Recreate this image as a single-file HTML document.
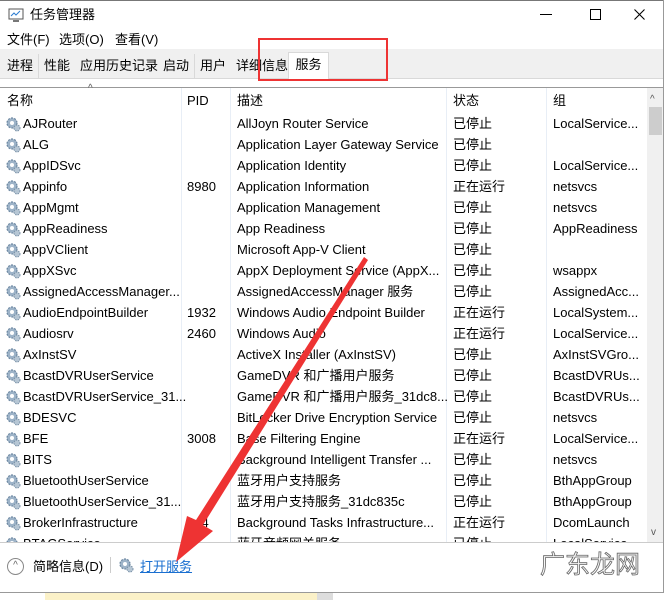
<!DOCTYPE html><html><head><meta charset="utf-8"><style>
body{margin:0;width:671px;height:600px;overflow:hidden;background:#fff;font-family:"Liberation Sans","Noto Sans CJK SC",sans-serif;font-size:13px;line-height:16px;color:#000;position:relative}
.a{position:absolute;white-space:nowrap}
.row{position:absolute;left:0;width:647px;height:21px}
.row span{position:absolute;top:3px;white-space:nowrap;line-height:16px;height:16px}
.vl{position:absolute;top:88px;height:454px;width:1px;background:#e8eef6}
.tab{position:absolute;top:54px;height:24px;background:#f0f0f0;border-right:1px solid #d9d9d9;line-height:24px;padding:0 5px;font-size:13px}
</style></head><body>
<div class="a" style="left:0;top:0;width:664px;height:1px;background:#777"></div>
<div class="a" style="left:663px;top:0;width:1px;height:592px;background:#999"></div>
<svg class="a" style="left:8px;top:7px" width="16" height="16"><rect x="1" y="2" width="14" height="10" fill="#fff" stroke="#555"/><polyline points="3,9 6,6 8,8 12,4" fill="none" stroke="#2a7bd0"/><rect x="5" y="13" width="6" height="2" fill="#777"/></svg>
<div class="a" style="left:30px;top:7px">任务管理器</div>
<div class="a" style="left:540px;top:14px;width:12px;height:1px;background:#000"></div>
<div class="a" style="left:590px;top:9px;width:9px;height:9px;border:1px solid #000"></div>
<svg class="a" style="left:634px;top:9px" width="11" height="11"><path d="M0.5 0.5L10.5 10.5M10.5 0.5L0.5 10.5" stroke="#000" stroke-width="1.1"/></svg>
<div class="a" style="left:7px;top:32px">文件(F)</div>
<div class="a" style="left:59px;top:32px">选项(O)</div>
<div class="a" style="left:115px;top:32px">查看(V)</div>
<div class="a" style="left:0;top:49px;width:663px;height:29px;background:#f0f0f0"></div>
<div class="a" style="left:0;top:78px;width:663px;height:1px;background:#d9d9d9"></div>
<div class="tab" style="left:2px">进程</div>
<div class="tab" style="left:39px">性能</div>
<div class="tab" style="left:75px">应用历史记录</div>
<div class="tab" style="left:158px">启动</div>
<div class="tab" style="left:195px">用户</div>
<div class="tab" style="left:231px">详细信息</div>
<div class="a" style="left:288px;top:52px;width:39px;height:27px;background:#fff;border:1px solid #d9d9d9;border-bottom:none;line-height:24px;text-align:center">服务</div>
<div class="a" style="left:258px;top:38px;width:126px;height:39px;border:2px solid #ee3333"></div>
<div class="a" style="left:0;top:87px;width:663px;height:1px;background:#999"></div>
<div class="a" style="left:88px;top:81px;font-size:10px;color:#555">^</div>
<div class="a" style="left:7px;top:93px">名称</div>
<div class="a" style="left:187px;top:93px">PID</div>
<div class="a" style="left:237px;top:93px">描述</div>
<div class="a" style="left:453px;top:93px">状态</div>
<div class="a" style="left:553px;top:93px">组</div>
<div class="vl" style="left:181px"></div><div class="vl" style="left:230px"></div><div class="vl" style="left:446px"></div><div class="vl" style="left:546px"></div>
<div class="a" style="left:647px;top:88px;width:16px;height:454px;background:#f0f0f0"></div>
<div class="a" style="left:649px;top:107px;width:13px;height:28px;background:#cdcdcd"></div>
<div class="a" style="left:650px;top:92px;font-size:10px;color:#555">^</div>
<div class="a" style="left:651px;top:525px;font-size:10px;color:#555">v</div>
<svg width="0" height="0" style="position:absolute"><defs><g id="g"><circle cx="7" cy="7" r="5" fill="#9db3c8" stroke="#6b86a0" stroke-width="1.2" stroke-dasharray="2 1.2"/><circle cx="7" cy="7" r="2" fill="#fff"/><circle cx="12" cy="12" r="3" fill="#b6c6d4" stroke="#7890a6" stroke-dasharray="1.5 1"/></g></defs></svg>
<div id="rows"></div>
<script>
var d=[["AJRouter","","AllJoyn Router Service","已停止","LocalService..."],["ALG","","Application Layer Gateway Service","已停止",""],["AppIDSvc","","Application Identity","已停止","LocalService..."],["Appinfo","8980","Application Information","正在运行","netsvcs"],["AppMgmt","","Application Management","已停止","netsvcs"],["AppReadiness","","App Readiness","已停止","AppReadiness"],["AppVClient","","Microsoft App-V Client","已停止",""],["AppXSvc","","AppX Deployment Service (AppX...","已停止","wsappx"],["AssignedAccessManager...","","AssignedAccessManager 服务","已停止","AssignedAcc..."],["AudioEndpointBuilder","1932","Windows Audio Endpoint Builder","正在运行","LocalSystem..."],["Audiosrv","2460","Windows Audio","正在运行","LocalService..."],["AxInstSV","","ActiveX Installer (AxInstSV)","已停止","AxInstSVGro..."],["BcastDVRUserService","","GameDVR 和广播用户服务","已停止","BcastDVRUs..."],["BcastDVRUserService_31...","","GameDVR 和广播用户服务_31dc8...","已停止","BcastDVRUs..."],["BDESVC","","BitLocker Drive Encryption Service","已停止","netsvcs"],["BFE","3008","Base Filtering Engine","正在运行","LocalService..."],["BITS","","Background Intelligent Transfer ...","已停止","netsvcs"],["BluetoothUserService","","蓝牙用户支持服务","已停止","BthAppGroup"],["BluetoothUserService_31...","","蓝牙用户支持服务_31dc835c","已停止","BthAppGroup"],["BrokerInfrastructure","944","Background Tasks Infrastructure...","正在运行","DcomLaunch"],["BTAGService","","蓝牙音频网关服务","已停止","LocalService..."]];
var h="";d.forEach(function(r,i){h+='<div class="row" style="top:'+(113+i*21)+'px"><svg style="position:absolute;left:5px;top:3px" width="16" height="16"><use href="#g"/></svg><span style="left:23px">'+r[0]+'</span><span style="left:187px">'+r[1]+'</span><span style="left:237px">'+r[2]+'</span><span style="left:453px">'+r[3]+'</span><span style="left:553px">'+r[4]+'</span></div>'});
document.getElementById("rows").innerHTML=h;
</script>
<div class="a" style="left:0;top:542px;width:663px;height:50px;background:#fff;border-top:1px solid #ccc"></div>
<div class="a" style="left:0;top:592px;width:664px;height:1px;background:#999"></div>
<div class="a" style="left:45px;top:593px;width:272px;height:7px;background:#fbf1c8"></div>
<div class="a" style="left:317px;top:593px;width:16px;height:7px;background:#ddd"></div>
<div class="a" style="left:7px;top:558px;width:15px;height:15px;border:1px solid #888;border-radius:50%;font-size:10px;line-height:14px;text-align:center;color:#666">^</div>
<div class="a" style="left:33px;top:559px">简略信息(D)</div>
<div class="a" style="left:110px;top:557px;width:1px;height:16px;background:#ccc"></div>
<svg class="a" style="left:118px;top:557px" width="16" height="16"><use href="#g"/></svg>
<div class="a" style="left:140px;top:559px;color:#1a6fd0;text-decoration:underline">打开服务</div>
<div class="a" style="left:540px;top:548px;font-size:25px;line-height:30px;color:#f6f6f6;-webkit-text-stroke:0.8px #666;font-family:'Noto Sans CJK SC',sans-serif">广东龙网</div>
<svg class="a" style="left:0;top:0" width="671" height="600"><polygon points="364,257 368,260 203,525 213,531 176,562 187,516 196,520" fill="#ee3333"/></svg>
</body></html>
